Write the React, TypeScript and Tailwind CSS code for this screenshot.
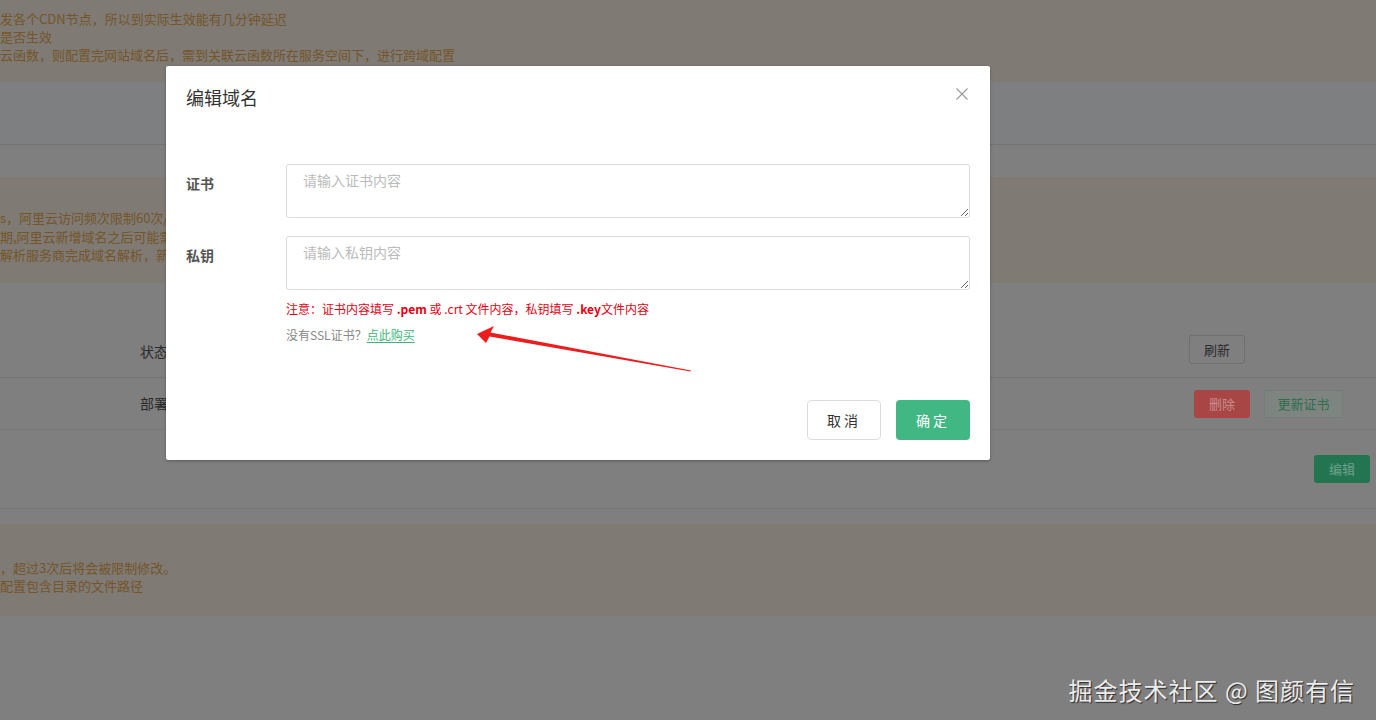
import { useState } from "react";

const cjk = "font-['Microsoft_YaHei','Noto_Sans_CJK_SC',sans-serif]";

export default function App() {
    return (
        <div className={`relative w-[1376px] h-[720px] overflow-hidden bg-[#7f7f7f] ${cjk}`}>
            <BackPage />
            <div className="absolute inset-0">
                <EditDomainModal />
            </div>
            <span className="absolute right-[21px] bottom-[18px] text-[24px] leading-none text-[#ececec] tracking-[1px] [text-shadow:1px_1px_1px_#2a2a2a]">
                掘金技术社区 @ 图颜有信
            </span>
        </div>
    );
}

// the page behind the dialog, already dimmed by the mask
const BackPage = () => {
    return (
        <div className="flex flex-col">
            <div className="h-[82px] bg-[#7f7a74] pt-[10px] text-[13px] leading-[18px] text-[#74562a] whitespace-nowrap">
                <p>发各个CDN节点，所以到实际生效能有几分钟延迟</p>
                <p>是否生效</p>
                <p>云函数，则配置完网站域名后，需到关联云函数所在服务空间下，进行跨域配置</p>
            </div>
            <div className="h-[63px] bg-[#7e7f81] border-b border-[#747475]" />
            <div className="h-[32px]" />
            <div className="h-[106px] bg-[#7f7a74] pt-[32px] text-[13px] leading-[18.5px] text-[#74562a] whitespace-nowrap">
                <p>s，阿里云访问频次限制60次/分钟</p>
                <p>期,阿里云新增域名之后可能需要等待</p>
                <p>解析服务商完成域名解析，新增</p>
            </div>
            <div className="h-[42px]" />
            <div className="h-[53px] flex items-center border-b border-[#747474] pl-[140px] pr-[131px] text-[14px] text-[#2a2a2a]">
                <span className="flex-1">状态</span>
                <button className="-mt-[3px] h-[29px] w-[56px] rounded-[3px] border border-[#6f6f6f] text-[13px] text-[#2a2a2a]">刷新</button>
            </div>
            <div className="h-[52px] flex items-center border-b border-[#777777] pl-[140px] pr-[33px] text-[14px] text-[#2a2a2a]">
                <span className="flex-1">部署</span>
                <button className="h-[28px] w-[56px] rounded-[3px] bg-[#a84646] text-[13px] text-[#c98d8d]">删除</button>
                <button className="ml-[14px] h-[28px] w-[79px] rounded-[3px] border border-[#767c79] bg-[#7e8581] text-[13px] text-[#2e6e4e]">更新证书</button>
            </div>
            <div className="h-[79px] flex items-center justify-end pr-[6px] border-b border-[#747474]">
                <button className="h-[28px] w-[56px] rounded-[3px] bg-[#237552] text-[13px] text-[#6fa08a]">编辑</button>
            </div>
            <div className="h-[15px]" />
            <div className="h-[92px] bg-[#7f7a74] pt-[35px] text-[13px] leading-[18px] text-[#74562a] whitespace-nowrap">
                <p>，超过3次后将会被限制修改。</p>
                <p>配置包含目录的文件路径</p>
            </div>
        </div>
    );
};

const EditDomainModal = () => {
    const [cert, setCert] = useState("");
    const [key, setKey] = useState("");

    return (
        <div className="absolute left-[166px] top-[66px] w-[824px] h-[394px] bg-white rounded-[2px] shadow-[0_1px_3px_rgba(0,0,0,0.3)]">
            <div className="flex items-center justify-between h-[62px] pl-[20px] pr-[21px]">
                <h2 className="text-[18px] text-[#333]">编辑域名</h2>
                <button className="-mt-[7px] text-[#999] w-[14px] h-[14px] flex items-center justify-center">
                    <svg width="12" height="12" viewBox="0 0 12 12" fill="none" stroke="currentColor" strokeWidth="1.1">
                        <path d="M0.5 0.5L11.5 11.5M11.5 0.5L0.5 11.5" />
                    </svg>
                </button>
            </div>
            <div className="pt-[36px] pl-[20px] pr-[20px]">
                <div className="flex">
                    <label className="w-[100px] pt-[9px] text-[14px] font-bold text-[#555]">证书</label>
                    <textarea
                        value={cert}
                        onChange={e => setCert(e.target.value)}
                        placeholder="请输入证书内容"
                        className="flex-1 h-[54px] px-[16px] py-[5px] border border-[#dcdcdc] rounded-[3px] text-[14px] leading-[20px] placeholder:text-[#bbb] outline-none"
                    />
                </div>
                <div className="flex mt-[18px]">
                    <label className="w-[100px] pt-[9px] text-[14px] font-bold text-[#555]">私钥</label>
                    <textarea
                        value={key}
                        onChange={e => setKey(e.target.value)}
                        placeholder="请输入私钥内容"
                        className="flex-1 h-[54px] px-[16px] py-[5px] border border-[#dcdcdc] rounded-[3px] text-[14px] leading-[20px] placeholder:text-[#bbb] outline-none"
                    />
                </div>
                <div className="relative pl-[100px] pt-[11px]">
                    <p className="text-[12px] leading-[16px] text-[#e60012] whitespace-nowrap">
                        注意：证书内容填写 <b>.pem</b> 或 .crt 文件内容，私钥填写 <b>.key</b>文件内容
                    </p>
                    <p className="mt-[10px] text-[12px] leading-[16px] text-[#888]">
                        没有SSL证书？<a className="text-[#3cb67a] underline underline-offset-2">点此购买</a>
                    </p>
                    <svg className="absolute left-[291px] top-[36px]" width="216" height="48" viewBox="0 0 216 48">
                        <path d="M0 8L17 0L13.5 6.5L214 44.5L213.5 45.5L12.5 10.5L9 17Z" fill="#ee1c1c" />
                    </svg>
                </div>
                <div className="flex justify-end gap-[15px] mt-[57px]">
                    <button className="w-[74px] h-[40px] rounded-[4px] border border-[#dcdcdc] text-[14px] text-[#333] tracking-[3px]">取消</button>
                    <button className="w-[74px] h-[40px] rounded-[4px] bg-[#41b883] text-[14px] text-white tracking-[3px]">确定</button>
                </div>
            </div>
        </div>
    );
};
